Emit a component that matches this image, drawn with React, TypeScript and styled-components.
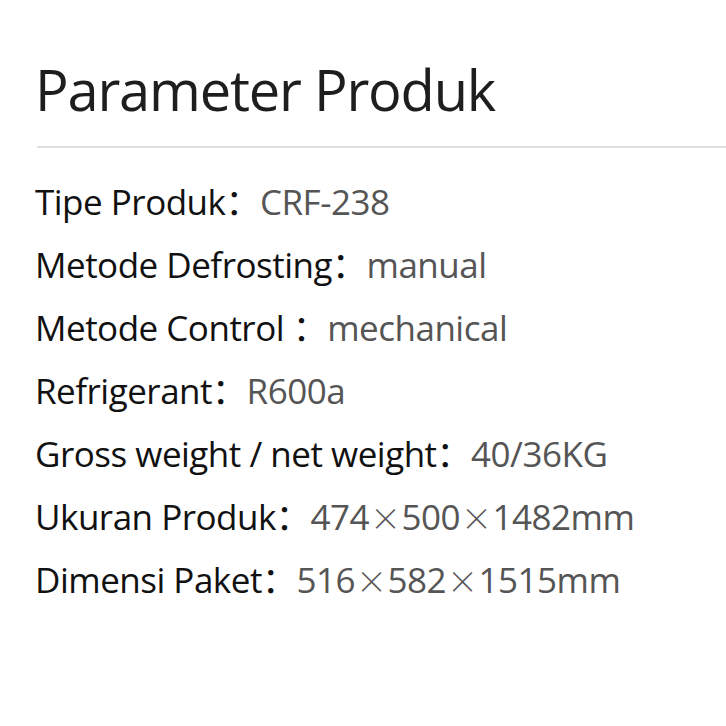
import styled, { createGlobalStyle } from "styled-components";

const GlobalStyle = createGlobalStyle`
  html, body {
    margin: 0;
    padding: 0;
    background: #fff;
  }
`;

const Page = styled.div`
  width: 726px;
  height: 726px;
  box-sizing: border-box;
  padding: 56px 0 0 35px;
  font-family: "Open Sans", "Noto Sans CJK SC", sans-serif;
  overflow: hidden;
`;

const Title = styled.h1`
  margin: 0;
  font-size: 56px;
  font-weight: 500;
  line-height: 66px;
  color: #1e1e1e;
  letter-spacing: -1.2px;
`;

const Divider = styled.hr`
  margin: 24px 0 0 2px;
  border: 0;
  border-top: 2px solid #e0e0e0;
`;

const List = styled.div`
  display: flex;
  flex-direction: column;
  margin-top: 27px;
`;

const Row = styled.div`
  display: flex;
  align-items: baseline;
  height: 63px;
  font-size: 35px;
  line-height: 50px;
  letter-spacing: -0.5px;
  white-space: pre;
`;

const Label = styled.span`
  color: #111;
`;

const Colon = styled.span`
  font-family: "Noto Sans CJK SC", sans-serif;
  color: #111;
`;

const Value = styled.span`
  color: #555;
`;

const Times = styled.span`
  display: inline-block;
  font-family: "Noto Sans CJK SC", sans-serif;
  font-size: 31px;
  font-weight: 300;
  margin: 0 1px;
`;

const rows: [string, string][] = [
  ["Tipe Produk", "CRF-238"],
  ["Metode Defrosting", "manual"],
  ["Metode Control ", "mechanical"],
  ["Refrigerant", "R600a"],
  ["Gross weight / net weight", "40/36KG"],
  ["Ukuran Produk", "474×500×1482mm"],
  ["Dimensi Paket", "516×582×1515mm"],
];

const renderValue = (value: string) =>
  value.split("×").map((part, i) => (
    <span key={i}>
      {i > 0 && <Times>×</Times>}
      {part}
    </span>
  ));

export default function App() {
  return (
    <>
      <GlobalStyle />
      <Page>
        <Title>Parameter Produk</Title>
        <Divider />
        <List>
          {rows.map(([label, value]) => (
            <Row key={label}>
              <Label>{label}</Label>
              <Colon>：</Colon>
              <Value>{renderValue(value)}</Value>
            </Row>
          ))}
        </List>
      </Page>
    </>
  );
}
